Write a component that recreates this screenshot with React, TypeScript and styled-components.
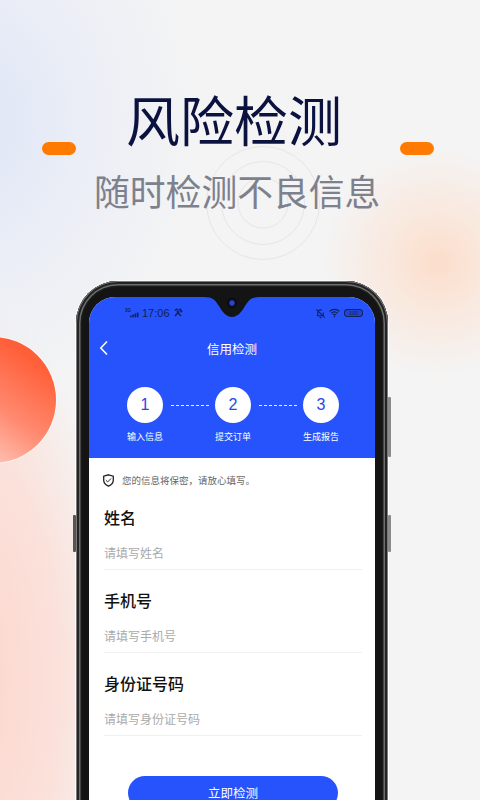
import styled, { createGlobalStyle } from 'styled-components';
import { Check } from 'lucide-react';

const fontStack = `"Noto Sans CJK SC", "Noto Sans", sans-serif`;

const GlobalStyle = createGlobalStyle`
  html, body {
    margin: 0;
    padding: 0;
    background: #f4f4f4;
  }
  * {
    box-sizing: border-box;
  }
`;

const steps = [
  { num: '1', label: '输入信息' },
  { num: '2', label: '提交订单' },
  { num: '3', label: '生成报告' },
];

const fields = [
  { label: '姓名', placeholder: '请填写姓名' },
  { label: '手机号', placeholder: '请填写手机号' },
  { label: '身份证号码', placeholder: '请填写身份证号码' },
];

const App = () => {
  return (
    <Page>
      <GlobalStyle />
      <RedCircle />
      <Rings viewBox="0 0 120 120" aria-hidden="true">
        <circle cx="60" cy="60" r="56.5" />
        <circle cx="60" cy="60" r="41.5" />
        <circle cx="60" cy="60" r="25" />
      </Rings>

      <Hero>
        <TitleRow>
          <Pill />
          <Title>风险检测</Title>
          <Pill />
        </TitleRow>
        <Subtitle>随时检测不良信息</Subtitle>
      </Hero>

      <Phone>
        <SideKey $side="left" $top={234} $height={37} />
        <SideKey $side="right" $top={116} $height={60} />
        <SideKey $side="right" $top={234} $height={37} />
        <Screen>
          <Notch>
            <svg width="56" height="20" viewBox="0 0 56 20" aria-hidden="true">
              <path d="M0 0C9 0 11 3 15 9C19 16 23 20 28 20C33 20 37 16 41 9C45 3 47 0 56 0Z" fill="#141414" />
            </svg>
            <Camera />
          </Notch>
          <BlueHead>
            <StatusBar>
              <StatusGroup>
                <svg width="14" height="10" viewBox="0 0 14 10" aria-hidden="true">
                  <text x="0" y="4" fontSize="4.5" fontWeight="700" fontFamily="Liberation Sans" fill="#14205a">3G</text>
                  <rect x="5" y="7.5" width="1.6" height="1.8" fill="#14205a" />
                  <rect x="7.3" y="6.5" width="1.6" height="2.8" fill="#14205a" />
                  <rect x="9.6" y="5.5" width="1.6" height="3.8" fill="#14205a" />
                  <rect x="11.9" y="4.5" width="1.6" height="4.8" fill="#14205a" />
                </svg>
                <StatusTime>17:06</StatusTime>
                <svg width="10" height="10" viewBox="0 0 24 24" fill="none" stroke="#14205a" strokeWidth="3.4" aria-hidden="true">
                  <path d="M5 19L15 8M19 19L9 8M4 6l5-3 3 3M14 5l3-2 4 5-3 2" />
                </svg>
              </StatusGroup>
              <StatusGroup>
                <svg width="11" height="11" viewBox="0 0 24 24" fill="none" stroke="#14205a" strokeWidth="2.4" aria-hidden="true">
                  <path d="M6 17V10a6 6 0 0 1 9-5M18 10v7H4M10 21h4M3 3l18 18" />
                </svg>
                <svg width="11" height="10" viewBox="0 0 24 20" fill="none" stroke="#14205a" strokeWidth="2.6" aria-hidden="true">
                  <path d="M1 6.5a16 16 0 0 1 22 0M5 10.5a10.5 10.5 0 0 1 14 0M8.5 14.5a5.5 5.5 0 0 1 7 0" />
                  <circle cx="12" cy="18" r="1.6" fill="#14205a" stroke="none" />
                </svg>
                <Battery>100</Battery>
              </StatusGroup>
            </StatusBar>
            <NavBar>
              <BackIcon width="10" height="16" viewBox="0 0 10 16" aria-hidden="true">
                <path d="M8 1.5L1.8 8 8 14.5" />
              </BackIcon>
              <NavTitle>信用检测</NavTitle>
            </NavBar>
            <Steps>
              {steps.map((step, i) => (
                <Step key={step.num} $last={i === steps.length - 1}>
                  <StepCircle>{step.num}</StepCircle>
                  <StepLabel>{step.label}</StepLabel>
                  {i < steps.length - 1 && <StepLine />}
                </Step>
              ))}
            </Steps>
          </BlueHead>

          <Body>
            <Notice>
              <ShieldBadge>
                <svg width="11" height="13" viewBox="0 0 11 13" fill="none" stroke="#222" strokeWidth="1.3" aria-hidden="true">
                  <path d="M5.5 0.8L10.3 2.2v4c0 2.8-2 4.6-4.8 5.9C2.7 10.8 0.7 9 0.7 6.2v-4z" />
                </svg>
                <ShieldCheck size={7} strokeWidth={3.4} color="#222" />
              </ShieldBadge>
              <NoticeText>您的信息将保密，请放心填写。</NoticeText>
            </Notice>

            {fields.map((field) => (
              <Field key={field.label}>
                <FieldLabel>{field.label}</FieldLabel>
                <FieldHint>{field.placeholder}</FieldHint>
              </Field>
            ))}

            <SubmitButton>立即检测</SubmitButton>
          </Body>
        </Screen>
      </Phone>
    </Page>
  );
};

const Page = styled.div`
  position: relative;
  width: 480px;
  height: 800px;
  overflow: hidden;
  font-family: ${fontStack};
  background:
    radial-gradient(circle at 438px 262px, rgba(252, 220, 200, 0.95) 0, rgba(252, 226, 210, 0.7) 45px, rgba(247, 240, 235, 0) 115px),
    radial-gradient(ellipse 230px 290px at -30px 120px, rgba(222, 229, 247, 1) 0, rgba(232, 236, 247, 0.75) 50%, rgba(244, 244, 244, 0) 100%),
    radial-gradient(ellipse 150px 380px at -30px 680px, rgba(252, 214, 204, 1) 0, rgba(252, 222, 214, 0.85) 60%, rgba(244, 244, 244, 0) 100%),
    #f4f4f4;
`;

const RedCircle = styled.div`
  position: absolute;
  left: -70px;
  top: 337px;
  width: 126px;
  height: 126px;
  border-radius: 50%;
  background: linear-gradient(215deg, #ff5f38 18%, #ff8a70 52%, #ffdcd5 92%);
  box-shadow: 0 0 0 1px rgba(255, 255, 255, 0.6);
`;

const Rings = styled.svg`
  position: absolute;
  left: 203px;
  top: 143px;
  width: 120px;
  height: 120px;
  fill: none;
  stroke: #e6e6e6;
  stroke-width: 1;
`;

const Hero = styled.header`
  position: relative;
  display: flex;
  flex-direction: column;
  height: 281px;
  padding-top: 87px;
`;

const TitleRow = styled.div`
  display: flex;
  justify-content: space-between;
  align-items: flex-end;
  padding: 0 46px 0 42px;
`;

const Pill = styled.span`
  width: 34px;
  height: 13px;
  margin-bottom: -4px;
  border-radius: 7px;
  background: #ff7a00;
`;

const Title = styled.h1`
  margin: 0 0 0 -8px;
  font-size: 54px;
  line-height: 64px;
  font-weight: 400;
  color: #0b1240;
  white-space: nowrap;
`;

const Subtitle = styled.p`
  margin: 17px 0 0 94px;
  font-size: 35.8px;
  line-height: 44px;
  color: #7d818d;
  white-space: nowrap;
`;

const Phone = styled.div`
  position: relative;
  width: 312px;
  height: 540px;
  margin-left: 76px;
  padding: 16px 13px 0;
  border-radius: 42px 42px 0 0;
  background: #141414;
  box-shadow:
    0 0 0 1px rgba(255, 255, 255, 0.7),
    inset 0 0 0 1px #7a7a7a,
    inset 0 0 0 3px #242424,
    inset 0 0 0 4.5px #6e6e6e,
    inset 0 0 0 6px #1c1c1c;
`;

const SideKey = styled.span<{ $side: 'left' | 'right'; $top: number; $height: number }>`
  position: absolute;
  ${(p) => p.$side}: -3px;
  top: ${(p) => p.$top}px;
  width: 3px;
  height: ${(p) => p.$height}px;
  border-radius: 1px;
  background: ${(p) => (p.$side === 'left' ? '#555' : '#8a8a8a')};
`;

const Screen = styled.div`
  position: relative;
  width: 286px;
  height: 524px;
  border-radius: 26px 26px 0 0;
  overflow: hidden;
  background: #fff;
`;

const Notch = styled.div`
  position: absolute;
  left: 115px;
  top: 0;
  display: flex;
  justify-content: center;
  width: 56px;
  height: 20px;
`;

const Camera = styled.span`
  position: absolute;
  top: 0;
  left: 22px;
  width: 12px;
  height: 12px;
  border-radius: 50%;
  background: radial-gradient(circle, #2c46c8 0 22%, #0a0c22 42%, #0b0b10 60%, #34353b 100%);
`;

const BlueHead = styled.section`
  height: 161px;
  background: #2653fb;
`;

const StatusBar = styled.div`
  display: flex;
  justify-content: space-between;
  align-items: center;
  height: 32px;
  padding: 0 12px 0 36px;
`;

const StatusGroup = styled.div`
  display: flex;
  align-items: center;
  gap: 3px;
`;

const StatusTime = styled.span`
  font-family: "Liberation Sans", sans-serif;
  font-size: 11px;
  color: #14205a;
`;

const Battery = styled.span`
  width: 19px;
  height: 8px;
  margin-left: 1px;
  border: 1px solid #14205a;
  border-radius: 3px;
  font-family: "Liberation Sans", sans-serif;
  font-size: 5.5px;
  line-height: 6px;
  text-align: center;
  color: #14205a;
  background: rgba(20, 32, 90, 0.3);
`;

const NavBar = styled.div`
  position: relative;
  display: flex;
  align-items: center;
  justify-content: center;
  height: 38px;
`;

const BackIcon = styled.svg`
  position: absolute;
  left: 10px;
  fill: none;
  stroke: #fff;
  stroke-width: 1.6;
`;

const NavTitle = styled.h2`
  margin: 0;
  font-size: 12.5px;
  font-weight: 400;
  color: #fff;
`;

const Steps = styled.div`
  display: flex;
  padding: 20px 0 0 38px;
`;

const Step = styled.div<{ $last: boolean }>`
  position: relative;
  display: flex;
  flex-direction: column;
  align-items: center;
  width: 36px;
  margin-right: ${(p) => (p.$last ? 0 : 52)}px;
`;

const StepCircle = styled.div`
  width: 36px;
  height: 36px;
  border-radius: 50%;
  background: #fff;
  color: #1f49ea;
  font-family: "Liberation Sans", sans-serif;
  font-size: 16px;
  line-height: 36px;
  text-align: center;
`;

const StepLabel = styled.span`
  margin-top: 7px;
  font-size: 9px;
  line-height: 14px;
  color: #fff;
  white-space: nowrap;
`;

const StepLine = styled.span`
  position: absolute;
  left: 44px;
  top: 17.5px;
  width: 38px;
  border-top: 1px dashed rgba(255, 255, 255, 0.9);
`;

const Body = styled.main`
  display: flex;
  flex-direction: column;
  padding: 0 13px 0 15px;
`;

const Notice = styled.div`
  display: flex;
  align-items: flex-end;
  gap: 8px;
  height: 29px;
  margin-left: -1px;
`;

const ShieldBadge = styled.span`
  position: relative;
  display: flex;
  width: 11px;
  height: 13px;
`;

const ShieldCheck = styled(Check)`
  position: absolute;
  left: 2px;
  top: 2.5px;
`;

const NoticeText = styled.span`
  font-size: 9.5px;
  line-height: 14px;
  color: #666;
  white-space: nowrap;
`;

const Field = styled.div`
  display: flex;
  flex-direction: column;
  height: 83px;
  padding-top: 19px;
  border-bottom: 1px solid #f0f0f0;
`;

const FieldLabel = styled.label`
  font-size: 16px;
  line-height: 22px;
  font-weight: 500;
  color: #111;
`;

const FieldHint = styled.span`
  margin-top: 16px;
  font-size: 12px;
  line-height: 18px;
  color: #aaa;
`;

const SubmitButton = styled.button`
  align-self: flex-start;
  width: 210px;
  height: 34px;
  margin: 40px 0 0 24px;
  padding: 0;
  border: none;
  border-radius: 17px;
  background: #2653fb;
  color: #fff;
  font-family: ${fontStack};
  font-size: 12.5px;
  line-height: 34px;
`;

export default App;
